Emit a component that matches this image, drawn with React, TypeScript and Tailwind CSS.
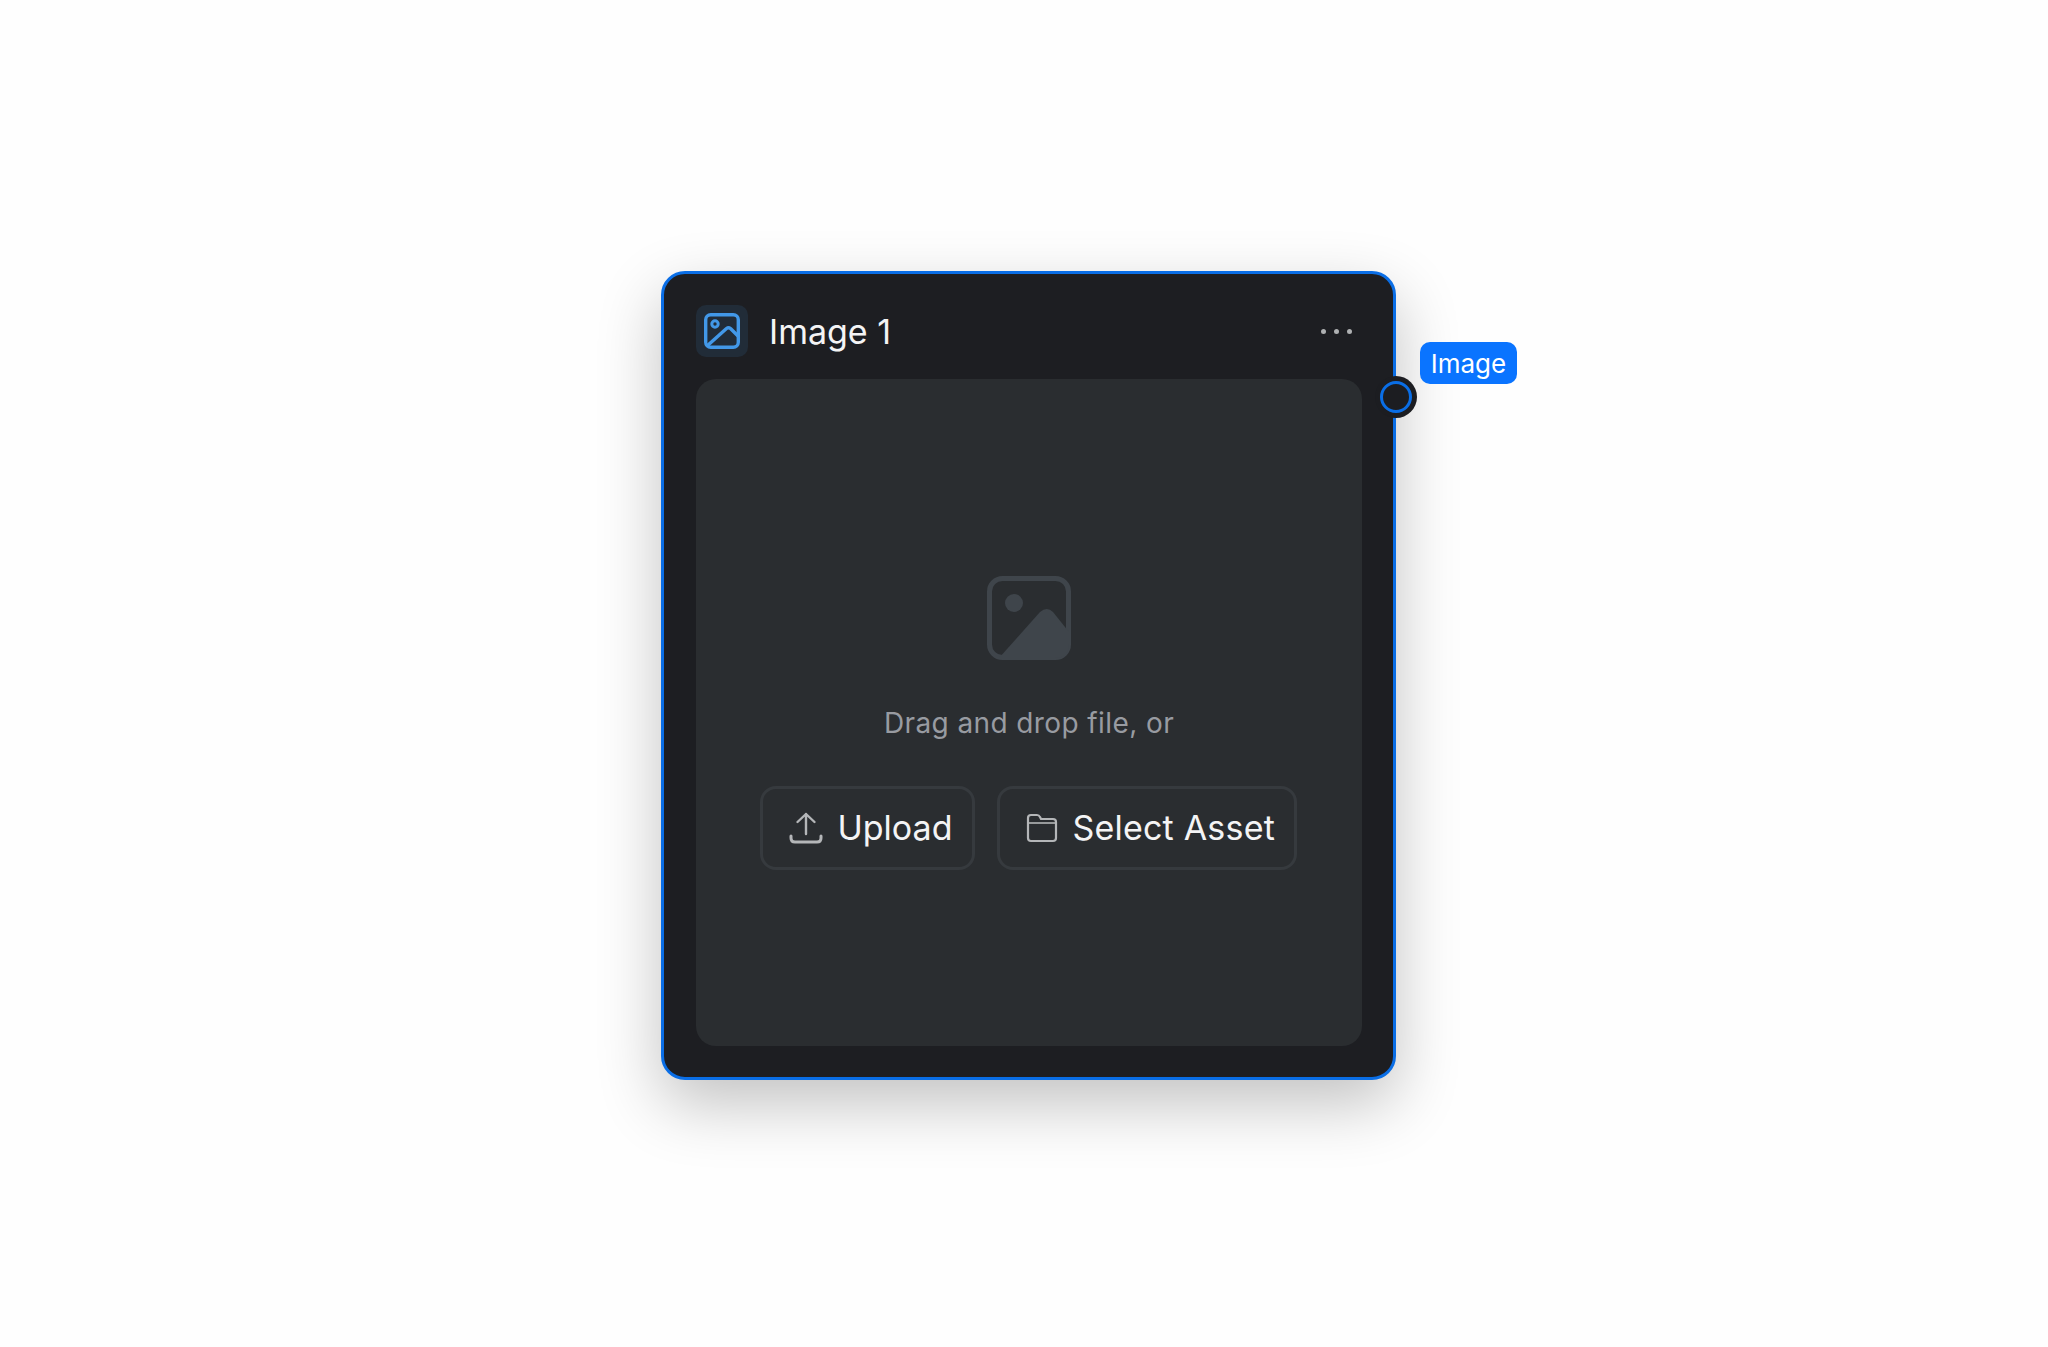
const ImageGlyph = () => (
  <svg viewBox="0 0 36 36" fill="none" className="w-[36px] h-[36px]">
    <rect x="1.700" y="1.700" width="32.600" height="32.600" rx="5" stroke="#4298e8" strokeWidth="3.400" />
    <circle cx="11" cy="11" r="3.200" stroke="#4298e8" strokeWidth="3" />
    <path d="M3 33 L22.500 15.500 Q24.500 14 26.500 15.500 L34 23" stroke="#4298e8" strokeWidth="3.400" strokeLinejoin="round" />
  </svg>
);

const PlaceholderGlyph = () => (
  <svg viewBox="0 0 84 84" fill="none" className="w-[84px] h-[84px]">
    <rect x="2.500" y="2.500" width="79" height="79" rx="13" stroke="#3f454b" strokeWidth="5" />
    <circle cx="27" cy="27" r="9" fill="#3f454b" />
    <path d="M12 82 L53 36 Q60 30 66 36 L82 56 V68 Q82 82 68 82 Z" fill="#3f454b" />
  </svg>
);

const UploadGlyph = () => (
  <svg viewBox="0 0 34 34" fill="none" stroke="#b4b6b8" strokeWidth="2.400" strokeLinecap="round" strokeLinejoin="round" className="w-[34px] h-[34px]">
    <path d="M17 23 V3 M8.500 11 L17 3 L25.500 11" />
    <path d="M2 25 V27 Q2 31 6 31 H28 Q32 31 32 27 V25" strokeWidth="3" />
  </svg>
);

const FolderGlyph = () => (
  <svg viewBox="0 0 32 32" fill="none" stroke="#b4b6b8" strokeWidth="2.200" strokeLinejoin="round" className="w-[32px] h-[32px]">
    <path d="M2 6 Q2 3 5 3 H11 Q13 3 14 5 L15 7 H27 Q30 7 30 10 V26 Q30 29 27 29 H5 Q2 29 2 26 Z" />
    <path d="M2 11 H30" strokeWidth="1.600" />
  </svg>
);

export default function App() {
  return (
    <div className="min-h-[1347px] bg-[#fefefe] pl-[661px] pt-[271px] font-['Inter',sans-serif]">
      <div className="relative w-[735px] h-[809px] rounded-[24px] border-[3px] border-[#0a6ee6] bg-[#1d1e22] pl-[32px] pr-[31px] pt-[31px] shadow-[0_24px_64px_rgba(0,0,0,0.24)]">
        <div className="flex items-center h-[52px]">
          <div className="flex items-center justify-center w-[52px] h-[52px] rounded-[10px] bg-[#212c38]">
            <ImageGlyph />
          </div>
          <span className="ml-[21px] pt-[2px] text-[34px] leading-none text-[#f4f4f5]">Image 1</span>
          <div className="ml-auto mr-[10px] flex items-center gap-[8px]">
            <span className="w-[5px] h-[5px] rounded-full bg-[#aeb0b2]" />
            <span className="w-[5px] h-[5px] rounded-full bg-[#aeb0b2]" />
            <span className="w-[5px] h-[5px] rounded-full bg-[#aeb0b2]" />
          </div>
        </div>

        <div className="mt-[22px] h-[667px] rounded-[20px] bg-[#2a2d30] flex flex-col items-center pt-[197px]">
          <PlaceholderGlyph />
          <p className="mt-[46px] text-[28px] leading-[34px] tracking-[0.4px] text-[#989ba1]">Drag and drop file, or</p>
          <div className="mt-[46px] mr-[2px] flex gap-[22px]">
            <button className="flex items-center h-[84px] w-[215px] pl-[26px] rounded-[16px] border-[3px] border-[#363a3e] text-[34px] text-[#f4f4f5]">
              <UploadGlyph />
              <span className="ml-[15px] pb-[2px]">Upload</span>
            </button>
            <button className="flex items-center h-[84px] w-[300px] pl-[26px] rounded-[16px] border-[3px] border-[#363a3e] text-[34px] tracking-[0.2px] text-[#f4f4f5]">
              <FolderGlyph />
              <span className="ml-[15px] pb-[2px]">Select Asset</span>
            </button>
          </div>
        </div>

        <div className="absolute left-[711px] top-[102px] flex items-center justify-center w-[42px] h-[42px] rounded-full bg-[#1c1d21]">
          <div className="w-[32px] h-[32px] rounded-full border-[3px] border-[#0a6ee6]" />
        </div>
        <div className="absolute left-[756px] top-[68px] flex items-center justify-center w-[97px] h-[42px] pt-[2px] rounded-[10px] bg-[#0a74ff] text-[26px] leading-none text-white">
          Image
        </div>
      </div>
    </div>
  );
}
